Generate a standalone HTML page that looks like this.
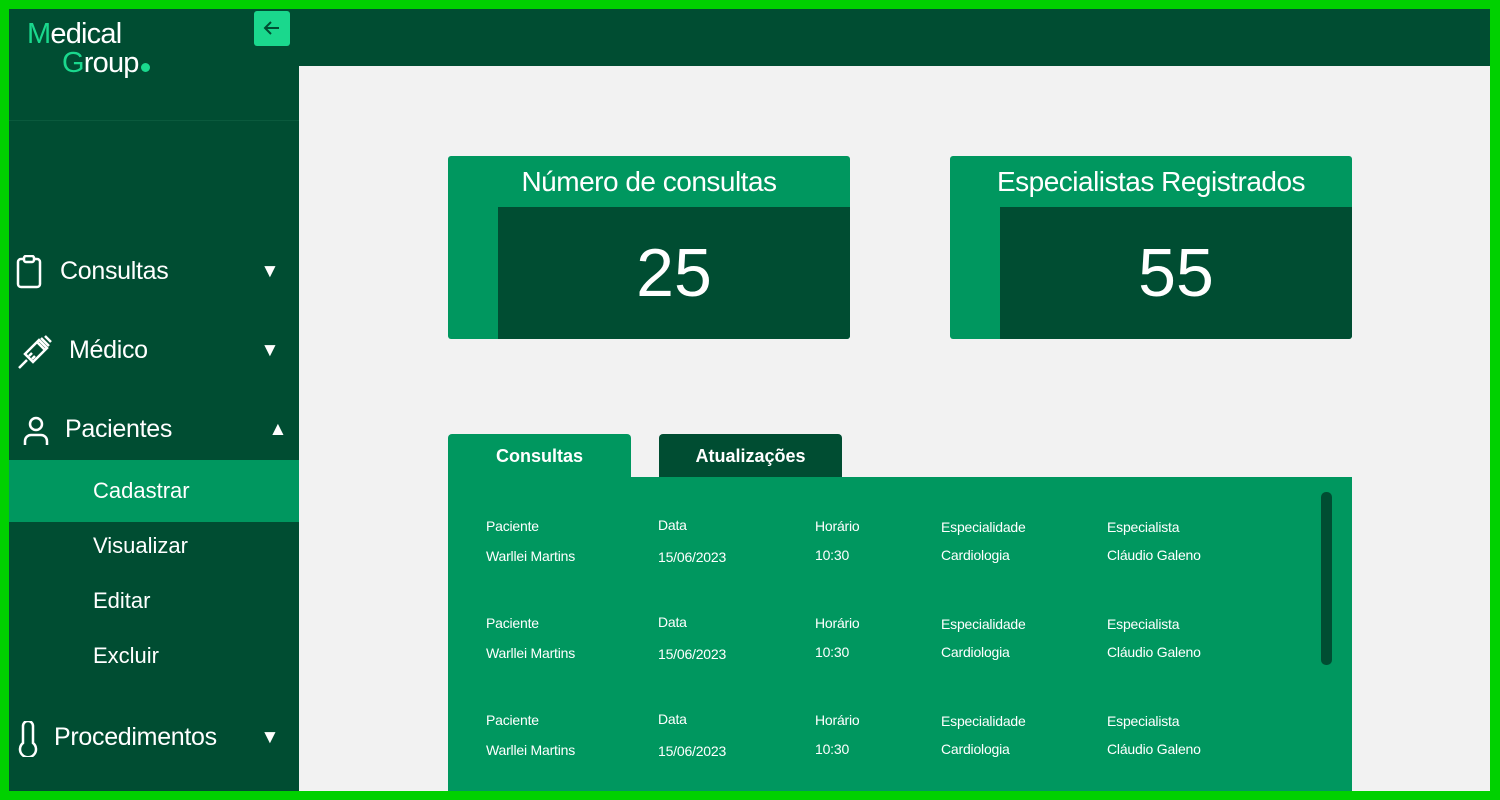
<!DOCTYPE html>
<html><head><meta charset="utf-8"><style>
*{margin:0;padding:0;box-sizing:border-box}
body{width:1500px;height:800px;overflow:hidden;background:#00d100;font-family:"Liberation Sans",sans-serif;position:relative}
.frame{position:absolute;left:9px;top:9px;width:1481px;height:782px;background:#f2f2f2;overflow:hidden}
.side{position:absolute;left:0;top:0;width:290px;height:782px;background:#004d32}
.top{position:absolute;left:290px;top:0;right:0;height:57px;background:#004d32}
.logo{position:absolute;left:18px;top:11px;color:#fff;font-size:29px;line-height:29px;letter-spacing:-0.8px}
.logo b{color:#1ad88d;font-weight:normal}
.dot{display:inline-block;width:9px;height:9px;border-radius:50%;background:#1ad88d;margin-left:2px}
.back{position:absolute;left:245px;top:2px;width:36px;height:35px;background:#1ad88d;border-radius:3px}
.hr{position:absolute;left:0;top:111px;width:290px;height:1px;background:#0a5a3d}
.item{position:absolute;left:0;width:290px;color:#fff;font-size:25px;letter-spacing:-0.3px}
.item svg.ic{position:absolute}
.tri{position:absolute;right:20px;font-size:19px}
.sub{position:absolute;left:0;width:290px;height:62px;color:#fff;font-size:22px;padding-left:84px;line-height:62px}
.card{position:absolute;top:147px;width:402px;height:183px;background:#00975f;border-radius:3px;overflow:hidden}
.card h2{font-weight:normal;color:#fff;font-size:28px;text-align:center;position:absolute;top:10px;left:0;right:0;letter-spacing:-0.5px}
.card .num{position:absolute;left:50px;top:51px;right:0;bottom:0;background:#004d32;color:#fff;font-size:68px;text-align:center;line-height:132px}
.tab{position:absolute;top:425px;height:45px;border-radius:4px 4px 0 0;color:#fff;font-weight:bold;font-size:18px;text-align:center;line-height:44px}
.panel{position:absolute;left:439px;top:468px;width:904px;height:330px;background:#00975f}
.cell{position:absolute;color:#fff;font-size:14px;white-space:nowrap;letter-spacing:-0.2px}
.sb{position:absolute;left:873px;top:15px;width:11px;height:173px;background:#004d32;border-radius:5px}
</style></head><body><div class="frame">
<div class="side">
<div class="logo"><b>M</b>edical<br><span style="margin-left:35px"></span><b>G</b>roup<span class="dot"></span></div>
<div class="back"><svg width="36" height="35" viewBox="0 0 36 35"><path d="M25 17H11M17 11l-6 6 6 6" stroke="#004d32" stroke-width="2" fill="none"/></svg></div>
<div class="hr"></div>
<div class="item" style="top:246px"><svg class="ic" style="left:7px;top:0" width="28" height="34" viewBox="0 0 28 34"><rect x="2" y="4" width="22" height="28" rx="3" stroke="#fff" stroke-width="2.5" fill="none"/><rect x="8" y="1" width="10" height="6" rx="2" stroke="#fff" stroke-width="2.5" fill="#004d32"/></svg><span style="position:absolute;left:51px;top:2px">Consultas</span><span class="tri" style="top:6px">▼</span></div>
<div class="item" style="top:325px"><svg class="ic" style="left:8px;top:0" width="36" height="36" viewBox="0 0 36 36"><path d="M2 34l8-8M8 20l8 8 14-14-8-8z M20 8l8 8M24 4l8 8M28 2l6 6M12 22l3-3M15 25l3-3" stroke="#fff" stroke-width="2.5" fill="none"/></svg><span style="position:absolute;left:60px;top:2px">Médico</span><span class="tri" style="top:6px">▼</span></div>
<div class="item" style="top:404px"><svg class="ic" style="left:14px;top:3px" width="26" height="30" viewBox="0 0 26 30"><circle cx="13" cy="8" r="6" stroke="#fff" stroke-width="2.5" fill="none"/><path d="M2 29v-4a6 6 0 0 1 6-6h10a6 6 0 0 1 6 6v4" stroke="#fff" stroke-width="2.5" fill="none"/></svg><span style="position:absolute;left:56px;top:2px">Pacientes</span><span class="tri" style="top:6px;right:12px">▲</span></div>
<div class="sub" style="top:451px;background:#00975f">Cadastrar</div>
<div class="sub" style="top:506px">Visualizar</div>
<div class="sub" style="top:561px">Editar</div>
<div class="sub" style="top:616px">Excluir</div>
<div class="item" style="top:712px"><svg class="ic" style="left:7px;top:0" width="24" height="36" viewBox="0 0 24 36"><path d="M7 22V5a5 5 0 0 1 10 0v17a8 8 0 1 1-10 0z" stroke="#fff" stroke-width="2.5" fill="none"/></svg><span style="position:absolute;left:45px;top:2px">Procedimentos</span><span class="tri" style="top:6px">▼</span></div>
</div>
<div class="top"></div>
<div class="card" style="left:439px"><h2>Número de consultas</h2><div class="num">25</div></div>
<div class="card" style="left:941px"><h2>Especialistas Registrados</h2><div class="num">55</div></div>
<div class="tab" style="left:439px;width:183px;background:#00975f">Consultas</div>
<div class="tab" style="left:650px;width:183px;background:#004d32">Atualizações</div>
<div class="panel">
<div class="sb"></div>
</div>
</div>
<div style="position:absolute;left:0;top:0">
<div class="cell" style="left:486px;top:518px">Paciente</div><div class="cell" style="left:658px;top:517px">Data</div><div class="cell" style="left:815px;top:518px">Horário</div><div class="cell" style="left:941px;top:519px">Especialidade</div><div class="cell" style="left:1107px;top:519px">Especialista</div>
<div class="cell" style="left:486px;top:548px">Warllei Martins</div><div class="cell" style="left:658px;top:549px">15/06/2023</div><div class="cell" style="left:815px;top:547px">10:30</div><div class="cell" style="left:941px;top:547px">Cardiologia</div><div class="cell" style="left:1107px;top:547px">Cláudio Galeno</div>
<div class="cell" style="left:486px;top:615px">Paciente</div><div class="cell" style="left:658px;top:614px">Data</div><div class="cell" style="left:815px;top:615px">Horário</div><div class="cell" style="left:941px;top:616px">Especialidade</div><div class="cell" style="left:1107px;top:616px">Especialista</div>
<div class="cell" style="left:486px;top:645px">Warllei Martins</div><div class="cell" style="left:658px;top:646px">15/06/2023</div><div class="cell" style="left:815px;top:644px">10:30</div><div class="cell" style="left:941px;top:644px">Cardiologia</div><div class="cell" style="left:1107px;top:644px">Cláudio Galeno</div>
<div class="cell" style="left:486px;top:712px">Paciente</div><div class="cell" style="left:658px;top:711px">Data</div><div class="cell" style="left:815px;top:712px">Horário</div><div class="cell" style="left:941px;top:713px">Especialidade</div><div class="cell" style="left:1107px;top:713px">Especialista</div>
<div class="cell" style="left:486px;top:742px">Warllei Martins</div><div class="cell" style="left:658px;top:743px">15/06/2023</div><div class="cell" style="left:815px;top:741px">10:30</div><div class="cell" style="left:941px;top:741px">Cardiologia</div><div class="cell" style="left:1107px;top:741px">Cláudio Galeno</div>
</div>
<div style="position:absolute;left:0;top:791px;width:1500px;height:9px;background:#00d100"></div>
</body></html>
